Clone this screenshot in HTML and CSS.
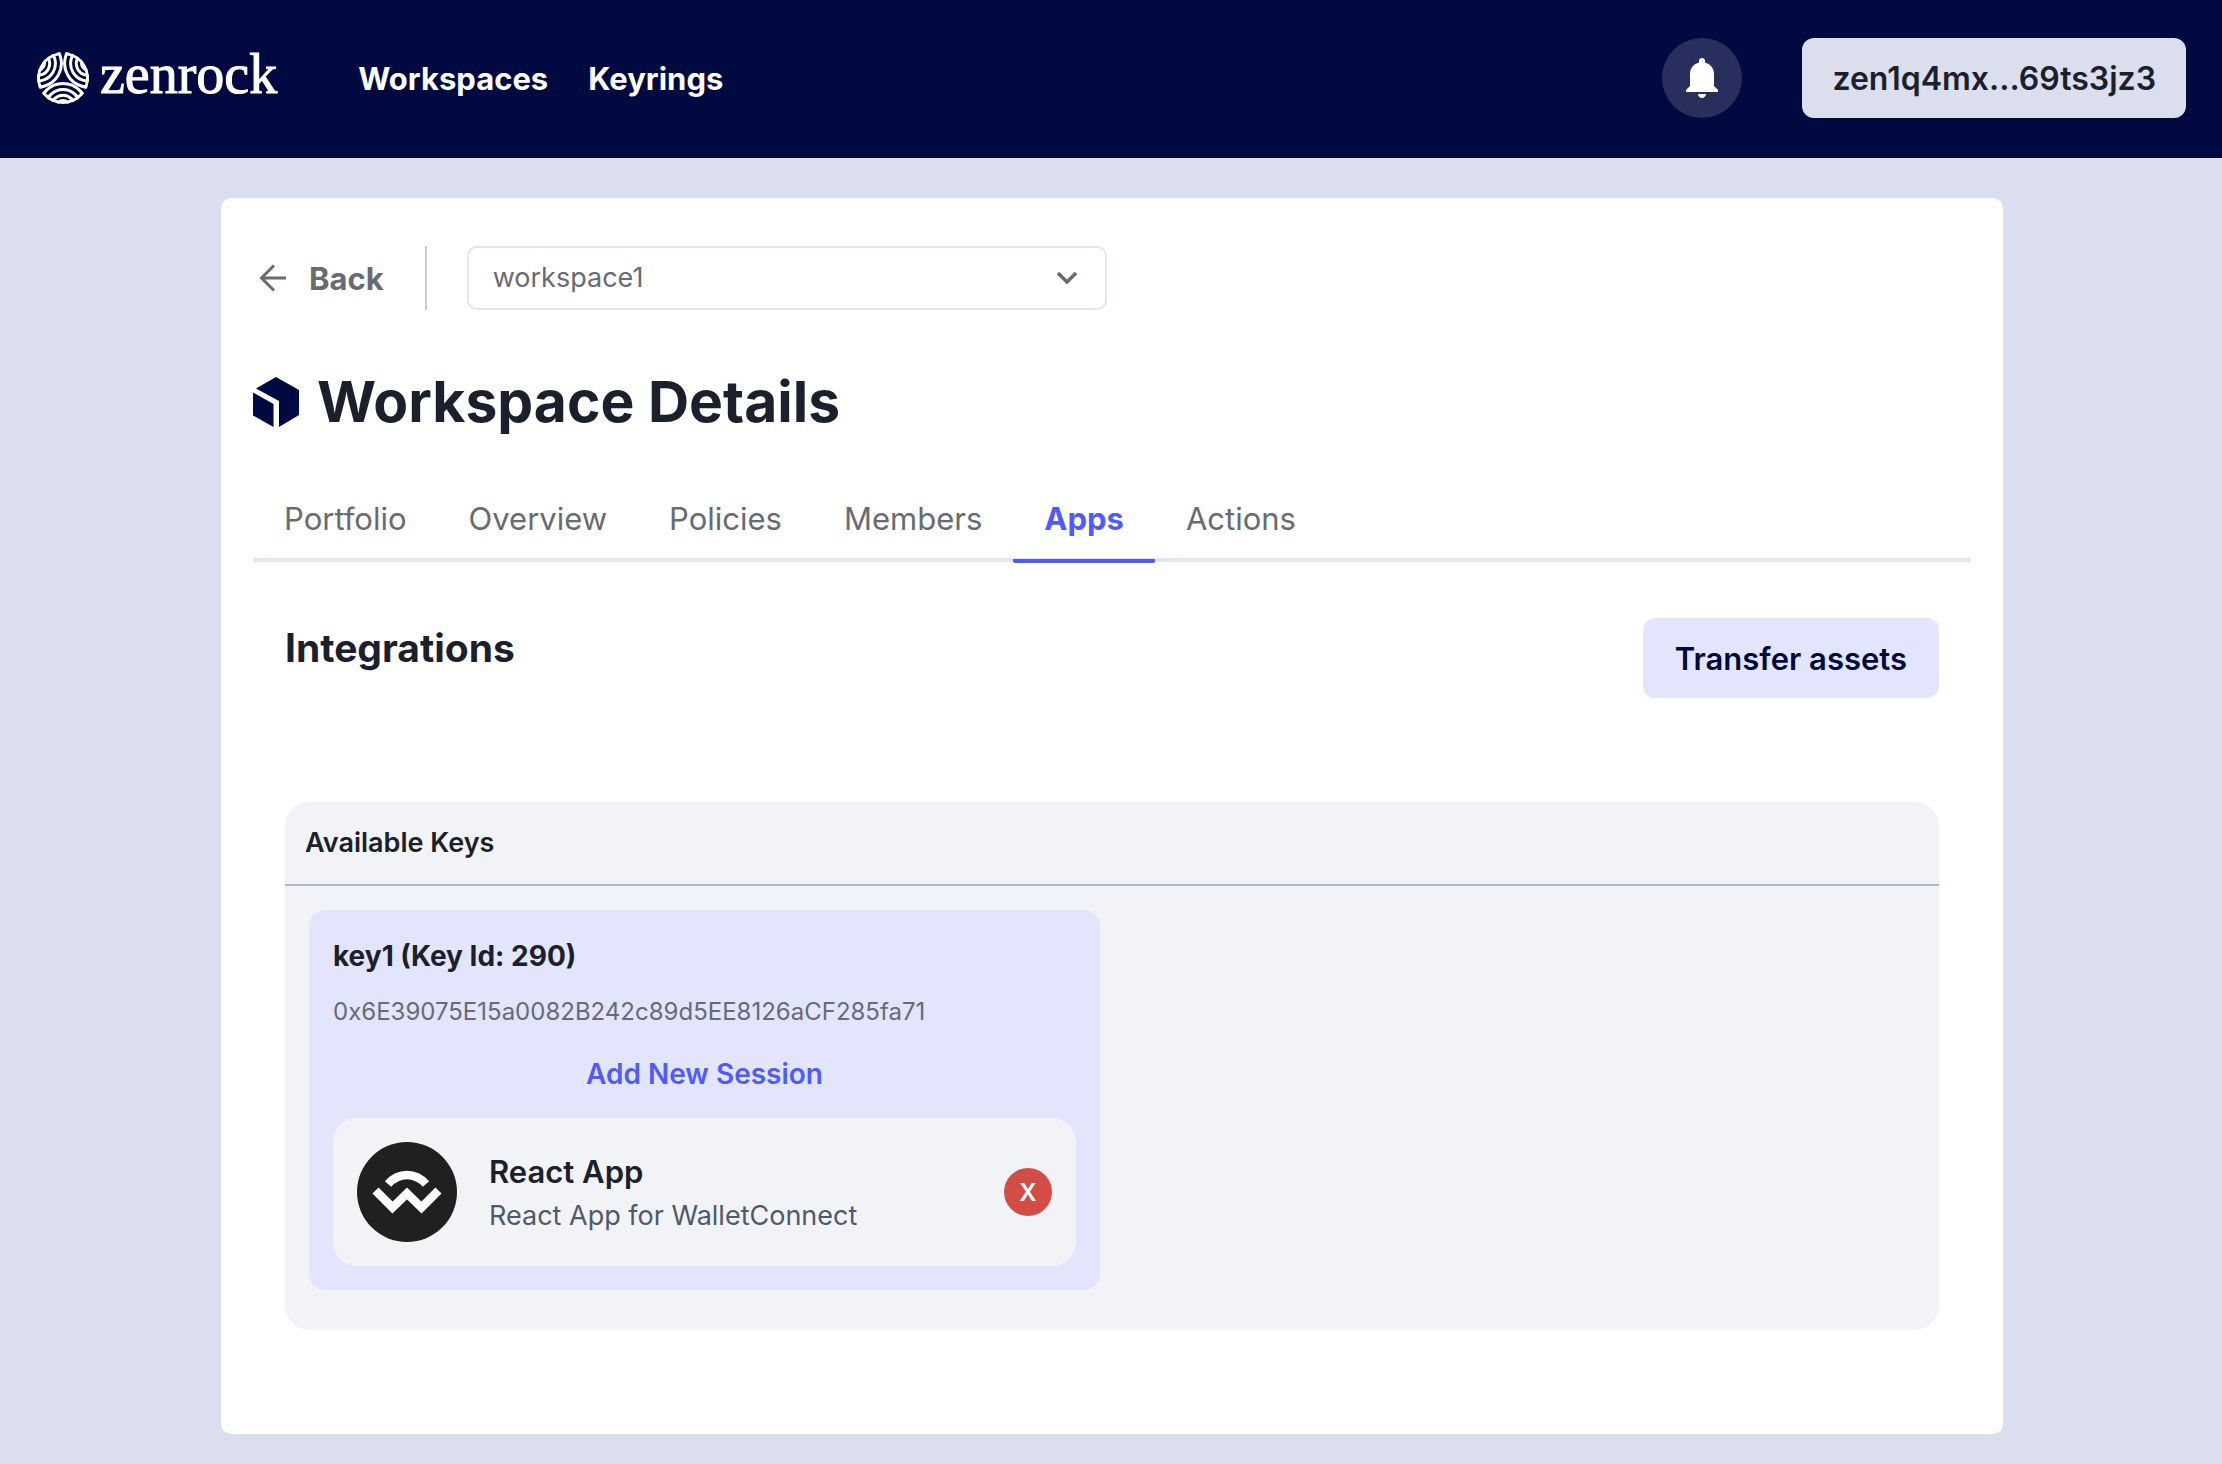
FILE: index.html
```html
<!DOCTYPE html>
<html lang="en">
<head>
<meta charset="utf-8">
<meta name="viewport" content="width=device-width, initial-scale=1">
<title>Workspace Details</title>
<link rel="stylesheet" href="styles.css">
</head>
<body>
<header class="header">
  <a class="brand" href="#">
    <svg class="brand-mark" viewBox="-27 -27 54 54" aria-hidden="true">
      <defs>
        <clipPath id="disc"><circle r="26"/></clipPath>
        <clipPath id="lobe-clip"><circle cy="29" r="25"/></clipPath>
        <g id="lobe" fill="none" stroke="#fff" stroke-width="3">
          <circle cy="29" r="23.500"/>
          <circle cy="29" r="17.500"/>
          <circle cy="29" r="11.800"/>
          <circle cy="29" r="6.500"/>
          <circle r="24.500" clip-path="url(#lobe-clip)"/>
        </g>
      </defs>
      <g clip-path="url(#disc)">
        <use href="#lobe"/>
        <use href="#lobe" transform="rotate(120)"/>
        <use href="#lobe" transform="rotate(240)"/>
      </g>
    </svg>
    <span class="brand-name">zenrock</span>
  </a>
  <nav class="nav">
    <a href="#">Workspaces</a>
    <a href="#">Keyrings</a>
  </nav>
  <button class="bell" type="button" aria-label="Notifications">
    <svg viewBox="0 0 32 40" aria-hidden="true"><path fill="#fff" d="M16 0c1.800 0 3 1.300 3 3v1.500c5 1.400 9 5.300 9 11.500v12l4 4v2H0v-2l4-4V16C4 9.800 8 5.900 13 4.500V3c0-1.700 1.200-3 3-3zM12 36h8c0 2-1.800 4-4 4s-4-2-4-4z"/></svg>
  </button>
  <button class="account" type="button">zen1q4mx...69ts3jz3</button>
</header>

<main class="card">
  <div class="toolbar">
    <a class="back" href="#">
      <svg viewBox="0 0 28 28" aria-hidden="true"><path d="M27 14H2M15 1.500L2.500 14 15 26.500" fill="none" stroke="currentColor" stroke-width="3"/></svg>
      <span>Back</span>
    </a>
    <div class="select-box">
      <select aria-label="Workspace"><option>workspace1</option></select>
      <svg viewBox="0 0 20 12" aria-hidden="true"><path d="M1 1l9 9 9-9" fill="none" stroke="currentColor" stroke-width="3.500"/></svg>
    </div>
  </div>

  <h1 class="title">
    <svg viewBox="0 0 46 50" aria-hidden="true"><path fill="#000940" d="M23 0l23 13v25L26 50V24L3 11.500zM0 15.500l20.500 11.500V50L0 38.500z"/></svg>
    Workspace Details
  </h1>

  <nav class="tabs">
    <a href="#">Portfolio</a>
    <a href="#">Overview</a>
    <a href="#">Policies</a>
    <a href="#">Members</a>
    <a class="active" href="#" aria-current="page">Apps</a>
    <a href="#">Actions</a>
  </nav>

  <section class="content">
    <div class="section-head">
      <h2>Integrations</h2>
      <button class="transfer" type="button">Transfer assets</button>
    </div>

    <div class="keys">
      <h3 class="keys-title">Available Keys</h3>
      <div class="keys-grid">
        <article class="key">
          <h4>key1 (Key Id: 290)</h4>
          <p class="address">0x6E39075E15a0082B242c89d5EE8126aCF285fa71</p>
          <button class="add" type="button">Add New Session</button>
          <div class="app">
            <svg class="avatar" viewBox="0 0 100 100" aria-hidden="true">
              <circle cx="50" cy="50" r="50" fill="#202020"/>
              <path fill="none" stroke="#fff" stroke-width="8.500" d="M31 42c11-12 27-12 38 0M18.500 48.500L35.500 65.500 50 51.500l14.500 14 17-17"/>
            </svg>
            <div class="app-text">
              <div class="app-name">React App</div>
              <div class="app-desc">React App for WalletConnect</div>
            </div>
            <button class="remove" type="button">X</button>
          </div>
        </article>
      </div>
    </div>
  </section>
</main>
</body>
</html>
```
FILE: styles.css
```css
* { box-sizing: border-box; }

body {
  margin: 0;
  min-height: 100vh;
  background: #dbdeec;
  color: #1b202c;
  font-family: Inter, "Liberation Sans", sans-serif;
  font-size: 27px;
  line-height: 40px;
}

a { color: inherit; text-decoration: none; }
h1, h2, h3, h4, p { margin: 0; }
button { border: 0; font: inherit; color: inherit; cursor: pointer; }
svg { display: block; flex: none; }

.header {
  display: flex;
  align-items: center;
  padding: 38px 36px 40px;
  background: #000940;
}
.brand { display: flex; align-items: center; gap: 10px; color: #fff; }
.brand-mark { width: 54px; height: 54px; }
.brand-name {
  font-family: "Liberation Serif", serif;
  font-size: 56px;
  line-height: 64px;
  -webkit-text-stroke: 1px #fff;
  padding-bottom: 8px;
}
.nav {
  display: flex;
  gap: 40px;
  margin: 0 auto 0 81px;
  padding-top: 2px;
  color: #fff;
  font-size: 31px;
  font-weight: 700;
}
.bell {
  display: grid;
  place-items: center;
  width: 80px;
  height: 80px;
  margin-right: 60px;
  padding: 0;
  border-radius: 50%;
  background: #292f5c;
}
.bell svg { width: 32px; height: 40px; }
.account {
  height: 80px;
  padding: 2px 30px 0;
  border-radius: 12px;
  background: #dbdeec;
  font-size: 32px;
  font-weight: 600;
}

.card {
  margin: 40px 219px 30px 221px;
  padding: 48px 32px 104px;
  border-radius: 10px;
  background: #fff;
}

.toolbar { display: flex; height: 64px; }
.back {
  display: flex;
  align-items: center;
  gap: 22px;
  padding: 0 41px 0 6px;
  border-right: 2px solid #c9cad3;
  color: #686a74;
  font-size: 31px;
  font-weight: 700;
}
.back span { padding-top: 2px; }
.back svg { width: 28px; height: 28px; }
.select-box {
  display: flex;
  align-items: center;
  flex: 0 1 640px;
  margin-left: 40px;
  position: relative;
  color: #686a74;
}
.select-box select {
  appearance: none;
  width: 100%;
  height: 100%;
  padding: 0 24px;
  border: 2px solid #e2e6ee;
  border-radius: 10px;
  background: #fff;
  color: inherit;
  font: inherit;
}
.select-box svg {
  position: absolute;
  right: 30px;
  width: 20px;
  height: 12px;
  pointer-events: none;
}

.title {
  display: flex;
  align-items: center;
  gap: 18px;
  margin-top: 54px;
  font-size: 57px;
  line-height: 76px;
  font-weight: 700;
}
.title svg { width: 46px; height: 50px; }

.tabs {
  display: flex;
  margin-top: 36px;
  border-bottom: 4px solid #e2e6ee;
  color: #686a74;
  font-size: 31px;
}
.tabs a {
  margin-bottom: -5px;
  padding: 19px 31px 16px;
  border-bottom: 4px solid transparent;
  border-radius: 2px;
  line-height: 48px;
}
.tabs .active { border-color: #4f5bff; color: #4f5bff; font-weight: 700; }

.content { padding: 56px 32px 0; }
.section-head { display: flex; justify-content: space-between; align-items: flex-start; }
.section-head h2 { font-size: 39px; line-height: 60px; font-weight: 700; }
.transfer {
  height: 80px;
  padding: 2px 32px 0;
  border-radius: 12px;
  background: #e3e5fd;
  color: #000940;
  font-size: 31px;
  font-weight: 600;
}

.keys {
  margin-top: 104px;
  padding-bottom: 40px;
  border-radius: 24px;
  background: #f1f3f7;
}
.keys-title {
  padding: 21px 20px;
  border-bottom: 2px solid #b3b5c8;
  font-size: 27px;
  font-weight: 600;
}
.keys-grid {
  display: grid;
  grid-template-columns: repeat(2, 1fr);
  gap: 24px;
  padding: 24px 24px 0;
}
.key {
  display: flex;
  flex-direction: column;
  padding: 26px 24px 24px;
  border-radius: 16px;
  background: #e3e5fd;
}
.key h4 { font-size: 28px; font-weight: 700; }
.address { margin-top: 16px; color: #686a74; font-size: 24px; }
.add {
  align-self: center;
  margin: 22px 0 24px;
  padding: 0;
  background: none;
  color: #4f5bff;
  font-size: 28px;
  font-weight: 600;
}
.app {
  display: flex;
  align-items: center;
  gap: 32px;
  padding: 24px;
  border-radius: 24px;
  background: #f1f3f7;
}
.avatar { width: 100px; height: 100px; }
.app-text { flex: 1; }
.app-name { font-size: 31px; line-height: 48px; font-weight: 600; }
.app-desc { color: #4f596b; }
.remove {
  width: 48px;
  height: 48px;
  padding: 2px 0 0;
  border-radius: 50%;
  background: #d34c46;
  color: #fff;
  font-size: 24px;
  font-weight: 600;
}
```
